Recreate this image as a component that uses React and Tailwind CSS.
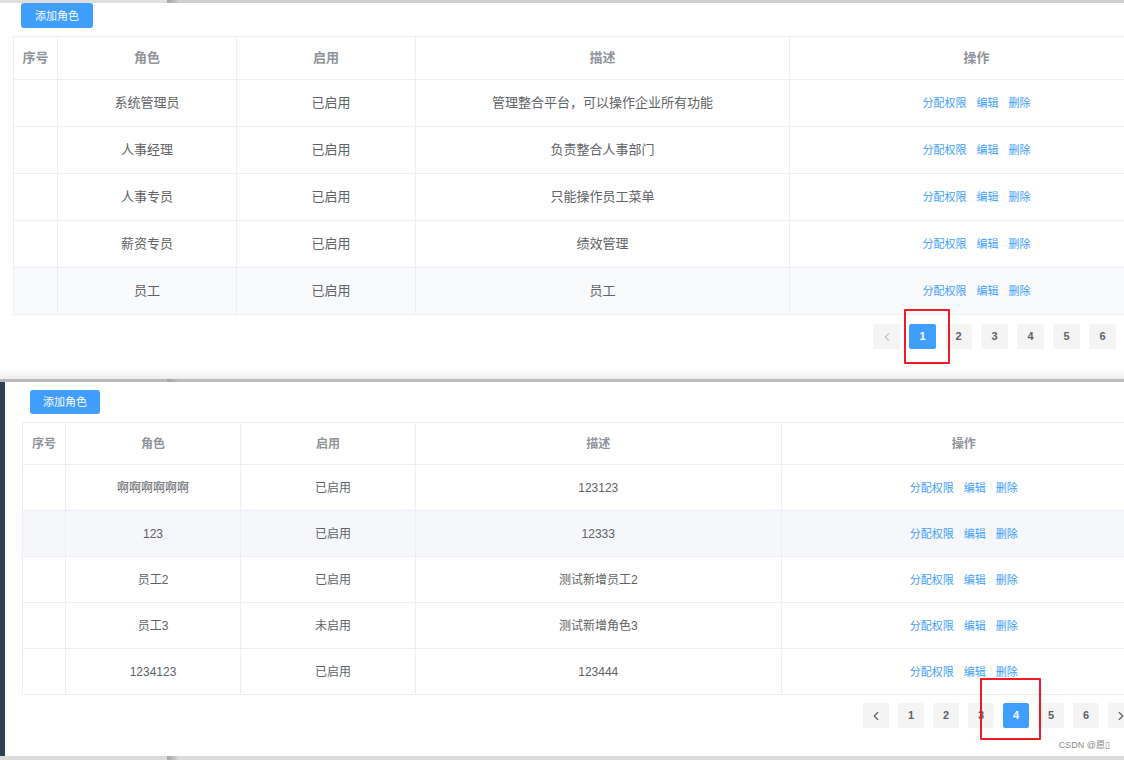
import { ChevronLeft, ChevronRight } from "lucide-react"
import clsx from "clsx"

const systemRoles = [
  { name: "系统管理员", status: "已启用", description: "管理整合平台，可以操作企业所有功能" },
  { name: "人事经理", status: "已启用", description: "负责整合人事部门" },
  { name: "人事专员", status: "已启用", description: "只能操作员工菜单" },
  { name: "薪资专员", status: "已启用", description: "绩效管理" },
  { name: "员工", status: "已启用", description: "员工", active: true },
]

const customRoles = [
  { name: "啊啊啊啊啊啊", status: "已启用", description: "123123" },
  { name: "123", status: "已启用", description: "12333", active: true },
  { name: "员工2", status: "已启用", description: "测试新增员工2" },
  { name: "员工3", status: "未启用", description: "测试新增角色3" },
  { name: "1234123", status: "已启用", description: "123444" },
]

const pages = [1, 2, 3, 4, 5, 6]

function AddButton({ className }) {
  return (
    <button
      type="button"
      className={clsx(
        "block rounded-[3px] bg-[#409eff] text-center text-[11px] leading-4 text-white",
        className
      )}
    >
      添加角色
    </button>
  )
}

function RoleTable({ rows, compact, className }) {
  const cell = "border-r border-b border-[#ebeef5] p-0"
  const rowHeight = compact ? "h-[46px]" : "h-[47px]"

  return (
    <table
      className={clsx(
        "w-full table-fixed border-separate border-spacing-0 border-t border-l border-[#ebeef5] text-center text-[#606266]",
        compact ? "text-[12px]" : "text-[13px]",
        className
      )}
    >
      <colgroup>
        <col className={compact ? "w-[43px]" : "w-[44px]"} />
        <col className={compact ? "w-[175px]" : "w-[179px]"} />
        <col className={compact ? "w-[175px]" : "w-[179px]"} />
        <col />
        <col />
      </colgroup>
      <thead>
        <tr className={clsx("text-[#909399]", compact ? "h-[42px]" : "h-[43px]")}>
          {["序号", "角色", "启用", "描述", "操作"].map((title) => (
            <th key={title} scope="col" className={clsx(cell, "font-bold")}>
              {title}
            </th>
          ))}
        </tr>
      </thead>
      <tbody>
        {rows.map((row) => (
          <tr
            key={row.name}
            className={clsx(rowHeight, row.active && (compact ? "bg-[#f5f7fa]" : "bg-[#f9fafc]"))}
          >
            <td className={cell}></td>
            <td className={cell}>{row.name}</td>
            <td className={clsx(cell, "pl-2.5!")}>{row.status}</td>
            <td className={cell}>{row.description}</td>
            <td className={cell}>
              <div className="flex justify-center gap-2.5 pt-px text-[11px] text-[#409eff]">
                <button type="button">分配权限</button>
                <button type="button">编辑</button>
                <button type="button">删除</button>
              </div>
            </td>
          </tr>
        ))}
      </tbody>
    </table>
  )
}

function Pagination({ current, compact, hasNext, markClass, className }) {
  const item = clsx(
    "relative flex h-[25px] shrink-0 items-center justify-center rounded-[2px]",
    compact ? "w-[26px]" : "w-[27px]"
  )

  return (
    <nav
      aria-label="分页"
      className={clsx(
        "flex justify-end gap-[9px] text-[11px] font-bold text-[#606266]",
        className
      )}
    >
      <button
        type="button"
        aria-label="上一页"
        disabled={current === 1}
        className={clsx(item, "bg-[#f4f4f5] disabled:text-[#c0c4cc]")}
      >
        <ChevronLeft size={14} strokeWidth={2} />
      </button>
      {pages.map((page) => (
        <button
          key={page}
          type="button"
          className={clsx(item, page === current ? "bg-[#409eff] text-white" : "bg-[#f4f4f5]")}
        >
          {page}
          {page === current && (
            <span
              className={clsx(
                "pointer-events-none absolute z-10 rounded-[1px] border-2 border-[#ed1c24]",
                markClass
              )}
            ></span>
          )}
        </button>
      ))}
      {hasNext && (
        <button type="button" aria-label="下一页" className={clsx(item, "bg-[#f4f4f5]")}>
          <ChevronRight size={14} strokeWidth={2} />
        </button>
      )}
    </nav>
  )
}

// thin strip of the page behind each window
function Edge({ className, leftClass, rightClass }) {
  return (
    <div className={clsx("flex", className)}>
      <div className={clsx("w-[167px]", leftClass)}></div>
      <div className={clsx("flex-1 bg-linear-to-r from-[#a3a3a3] to-[12px]", rightClass)}></div>
    </div>
  )
}

function App() {
  return (
    <div className="overflow-hidden bg-white font-['Liberation_Sans','Noto_Sans_CJK_SC',sans-serif]">
      <Edge className="h-[3px]" leftClass="bg-[#dedede]" rightClass="to-[#cfcfcf]" />

      <section>
        <AddButton className="ml-[21px] h-[25px] px-3.5" />
        <div className="mt-2 -mr-10 ml-[13px]">
          <RoleTable rows={systemRoles} />
        </div>
        <Pagination
          current={1}
          className="mt-[9px] pr-2"
          markClass="-top-[15px] -left-[5px] h-[55px] w-[46px]"
        />
        <div className="mt-5 h-2.5 bg-linear-to-b from-white to-[#ececec]"></div>
      </section>

      <Edge className="h-[3px]" leftClass="bg-[#b9b9b9]" rightClass="to-[#bcbcbc]" />

      <section className="relative border-l-5 border-[#304156] pt-2 pb-7">
        <AddButton className="ml-[25px] h-6 px-[13px]" />
        <div className="mt-2 -mr-[23px] ml-[17px]">
          <RoleTable rows={customRoles} compact />
        </div>
        <Pagination
          current={4}
          compact
          hasNext
          className="mt-2 -mr-2.5"
          markClass="-top-[25px] -left-[23px] h-[62px] w-[61px]"
        />
        <span className="absolute right-3.5 bottom-1 text-[9px] leading-3.5 text-[#8a8a8a]">
          CSDN @愿▯
        </span>
      </section>

      <Edge className="h-1" leftClass="bg-[#dcdcdc]" rightClass="to-[#dcdcdc]" />
    </div>
  )
}

export default App
